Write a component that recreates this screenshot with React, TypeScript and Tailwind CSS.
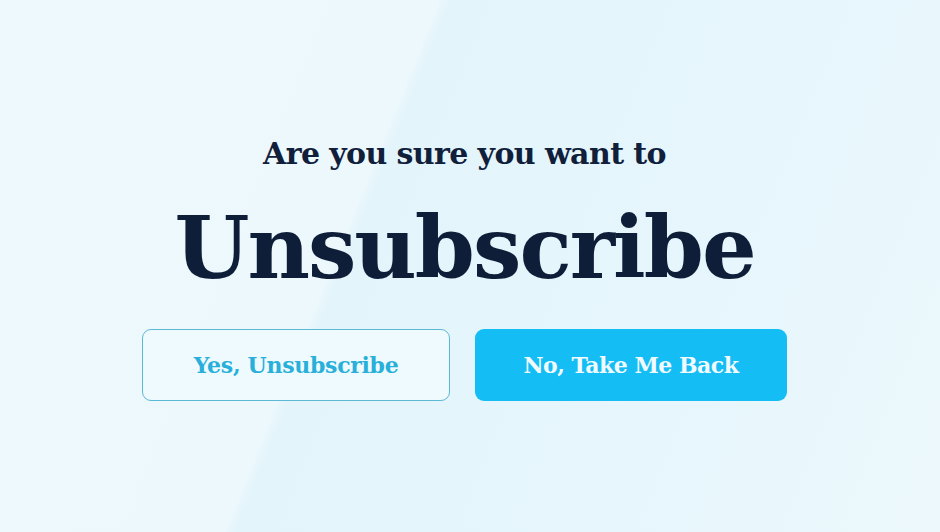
import { useState } from 'react';

const serif = { fontFamily: '"DejaVu Serif", "Liberation Serif", serif' };

export default function App() {
  const [choice, setChoice] = useState<'yes' | 'no' | null>(null);

  return (
    <div className="relative h-[532px] w-[940px] overflow-hidden bg-[#e6f6fc]">
      {/* soft diagonal wash behind the dialog */}
      <div className="absolute inset-0 bg-[linear-gradient(112deg,#eef9fd_0%,#ecf8fc_38%,#e3f4fb_39%,#e6f6fc_70%,#ecf8fc_100%)]" />
      <div className="relative flex flex-col items-center pr-[11px] pt-[134px]" style={serif}>
        <h2 className="text-[30px] font-bold leading-[40px] tracking-[-0.6px] text-[#10203b]">
          Are you sure you want to
        </h2>
        <h1 className="mt-[24px] text-[86px] font-bold leading-[100px] tracking-[-2px] text-[#0e1e39]">
          Unsubscribe
        </h1>
        <div className="mt-[31px] flex gap-[25px]">
          <button
            onClick={() => setChoice('yes')}
            className="flex h-[72px] w-[308px] items-center justify-center rounded-[9px] border-[1.5px] border-[#5cb9d4] bg-[#effafe] text-[22px] font-bold tracking-[-0.3px] text-[#28b0da]"
          >
            Yes, Unsubscribe
          </button>
          <button
            onClick={() => setChoice('no')}
            className="flex h-[72px] w-[312px] items-center justify-center rounded-[9px] bg-[#15bdf5] text-[22px] font-bold tracking-[-0.5px] text-[#f1fbff]"
          >
            No, Take Me Back
          </button>
        </div>
        {choice && <span className="sr-only">{choice}</span>}
      </div>
    </div>
  );
}
